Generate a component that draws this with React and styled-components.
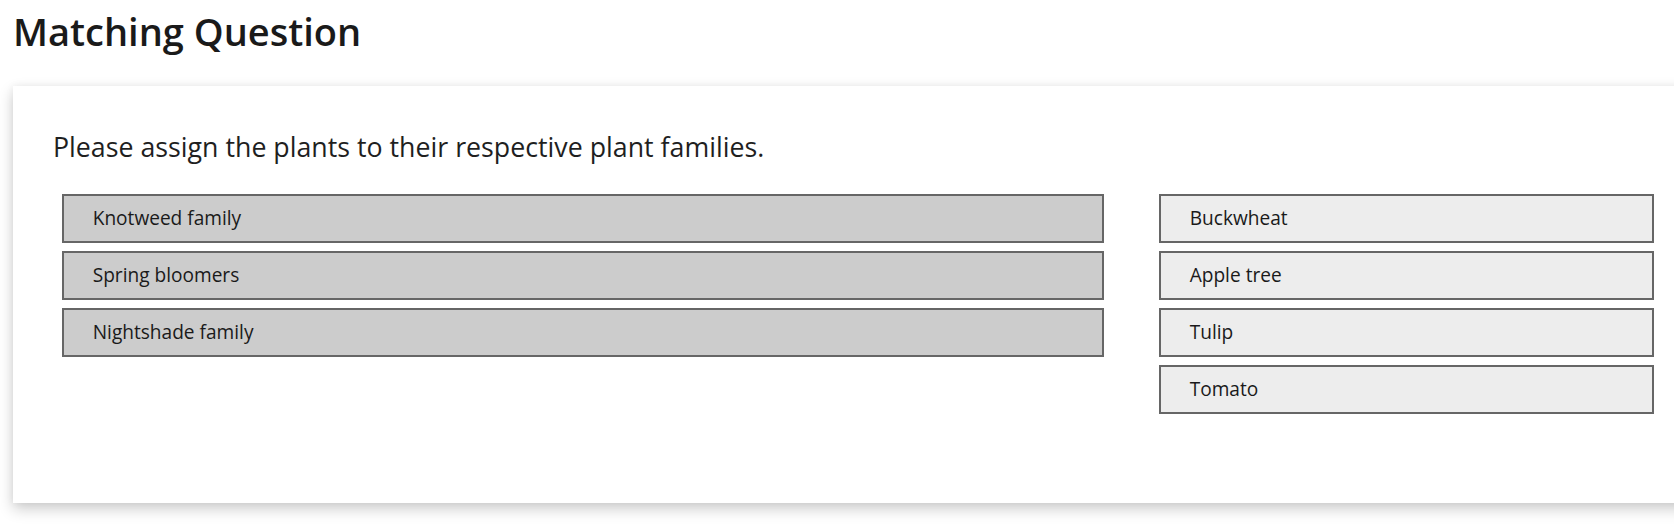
import React from "react";
import styled, { createGlobalStyle } from "styled-components";

const Global = createGlobalStyle`
  html, body {
    margin: 0;
    padding: 0;
    background: #ffffff;
    overflow: hidden;
  }
  body {
    font-family: "Open Sans", "Noto Sans", sans-serif;
    color: #1a1a1a;
  }
`;

const Page = styled.main`
  box-sizing: border-box;
  min-height: 527px;
  padding: 5px 0 24px 13px;
  width: 1701px;
`;

const Title = styled.h1`
  margin: 0 0 29px 0;
  font-size: 38px;
  font-weight: 600;
  line-height: normal;
  color: #1a1a1a;
`;

const Card = styled.section`
  box-sizing: border-box;
  width: 1688px;
  height: 417px;
  background: #ffffff;
  box-shadow: 0 6px 14px rgba(0, 0, 0, 0.2), 0 0 8px rgba(0, 0, 0, 0.05);
  padding: 42px 40px 0 40px;
`;

const Prompt = styled.p`
  margin: 0 0 29px 0;
  font-size: 26.75px;
  font-weight: 400;
  line-height: 37px;
  color: #1f1f1f;
`;

const Columns = styled.div`
  display: grid;
  grid-template-columns: 1042px 495px;
  column-gap: 55px;
  align-items: start;
  padding-left: 8.7px;
`;

const List = styled.ul`
  list-style: none;
  margin: 0;
  padding: 0;
  display: flex;
  flex-direction: column;
  gap: 8px;
`;

const Item = styled.li`
  box-sizing: border-box;
  height: 49px;
  display: flex;
  align-items: center;
  padding: 0 0 2px 29px;
  border: 2px solid #666666;
  background: ${(p) => (p.$target ? "#cccccc" : "#ededed")};
  font-size: 19.1px;
  color: #1a1a1a;
`;

const families = ["Knotweed family", "Spring bloomers", "Nightshade family"];
const plants = ["Buckwheat", "Apple tree", "Tulip", "Tomato"];

export default function App() {
  return (
    <>
      <Global />
      <Page>
        <Title>Matching Question</Title>
        <Card>
          <Prompt>Please assign the plants to their respective plant families.</Prompt>
          <Columns>
            <List>
              {families.map((f) => (
                <Item key={f} $target>
                  {f}
                </Item>
              ))}
            </List>
            <List>
              {plants.map((p) => (
                <Item key={p}>{p}</Item>
              ))}
            </List>
          </Columns>
        </Card>
      </Page>
    </>
  );
}
